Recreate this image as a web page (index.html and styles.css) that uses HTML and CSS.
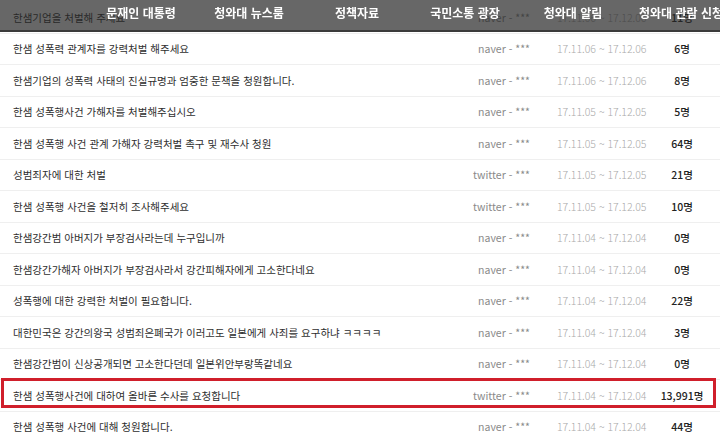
FILE: index.html
```html
<!DOCTYPE html>
<html lang="ko">
<head>
    <meta charset="UTF-8">
    <title>청원 목록</title>
    <link rel="stylesheet" href="styles.css">
</head>
<body>
    <div class="topbar">
        <a>문재인 대통령</a>
        <a>청와대 뉴스룸</a>
        <a>정책자료</a>
        <a>국민소통 광장</a>
        <a>청와대 알림</a>
        <a>청와대 관람 신청</a>
    </div>

    <ul class="list">
        <li><span class="title">한샘기업을 처벌해 주세요</span><span class="who">naver - ***</span><span class="date">17.11.06 ~ 17.12.06</span><span class="count">11명</span></li>
        <li><span class="title">한샘 성폭력 관계자를 강력처벌 해주세요</span><span class="who">naver - ***</span><span class="date">17.11.06 ~ 17.12.06</span><span class="count">6명</span></li>
        <li><span class="title">한샘기업의 성폭력 사태의 진실규명과 엄중한 문책을 청원합니다.</span><span class="who">naver - ***</span><span class="date">17.11.06 ~ 17.12.06</span><span class="count">8명</span></li>
        <li><span class="title">한샘 성폭행사건 가해자를 처벌해주십시오</span><span class="who">naver - ***</span><span class="date">17.11.05 ~ 17.12.05</span><span class="count">5명</span></li>
        <li><span class="title">한샘 성폭행 사건 관계 가해자 강력처벌 촉구 및 재수사 청원</span><span class="who">naver - ***</span><span class="date">17.11.05 ~ 17.12.05</span><span class="count">64명</span></li>
        <li><span class="title">성범죄자에 대한 처벌</span><span class="who">twitter - ***</span><span class="date">17.11.05 ~ 17.12.05</span><span class="count">21명</span></li>
        <li><span class="title">한샘 성폭행 사건을 철저히 조사해주세요</span><span class="who">twitter - ***</span><span class="date">17.11.05 ~ 17.12.05</span><span class="count">10명</span></li>
        <li><span class="title">한샘강간범 아버지가 부장검사라는데 누구입니까</span><span class="who">naver - ***</span><span class="date">17.11.04 ~ 17.12.04</span><span class="count">0명</span></li>
        <li><span class="title">한샘강간가해자 아버지가 부장검사라서 강간피해자에게 고소한다네요</span><span class="who">naver - ***</span><span class="date">17.11.04 ~ 17.12.04</span><span class="count">0명</span></li>
        <li><span class="title">성폭행에 대한 강력한 처벌이 필요합니다.</span><span class="who">naver - ***</span><span class="date">17.11.04 ~ 17.12.04</span><span class="count">22명</span></li>
        <li><span class="title">대한민국은 강간의왕국 성범죄은폐국가 이러고도 일본에게 사죄를 요구하냐 ㅋㅋㅋㅋ</span><span class="who">naver - ***</span><span class="date">17.11.04 ~ 17.12.04</span><span class="count">3명</span></li>
        <li><span class="title">한샘강간범이 신상공개되면 고소한다던데 일본위안부랑똑같네요</span><span class="who">naver - ***</span><span class="date">17.11.04 ~ 17.12.04</span><span class="count">0명</span></li>
        <li class="marked"><span class="title">한샘 성폭행사건에 대하여 올바른 수사를 요청합니다</span><span class="who">twitter - ***</span><span class="date">17.11.04 ~ 17.12.04</span><span class="count">13,991명</span></li>
        <li><span class="title">한샘 성폭행 사건에 대해 청원합니다.</span><span class="who">naver - ***</span><span class="date">17.11.04 ~ 17.12.04</span><span class="count">44명</span></li>
    </ul>
</body>
</html>
```

FILE: styles.css
```css
body {
    margin: 0;
    background: #fff;
    font-family: 'Noto Sans CJK KR', 'Noto Sans', sans-serif;
    overflow: hidden;
}

/* dark see-through menu over the list */
.topbar {
    position: fixed;
    top: 0;
    left: 0;
    right: 0;
    height: 32px;
    box-sizing: border-box;
    padding: 4px 0 0 87px;
    display: flex;
    background: rgba(38, 38, 38, 0.7);
    border-bottom: 2px solid #3b3b3b;
    white-space: nowrap;
    z-index: 2;
}

.topbar a {
    flex: 0 0 108px;
    text-align: center;
    color: #fff;
    font-size: 12px;
    font-weight: bold;
    line-height: 17px;
}

.list {
    list-style: none;
    margin: 0;
    padding: 2px 0 0;
}

.list li {
    position: relative;
    display: flex;
    align-items: center;
    height: 31.5px;
    box-sizing: border-box;
    padding-left: 13px;
    border-bottom: 1px solid #efefef;
    font-size: 10.5px;
    white-space: nowrap;
}

.title {
    flex: 1;
    color: #2e2e2e;
}

.who {
    width: 90px;
    text-align: right;
    color: #8a8a8a;
}

.date {
    width: 94px;
    margin-left: 27px;
    color: #aaa;
    font-weight: 300;
}

.count {
    width: 62px;
    text-align: center;
    color: #222;
    font-weight: 500;
    margin-right: 7px;
}

.marked::after {
    content: "";
    position: absolute;
    left: 1px;
    right: 4px;
    top: -2px;
    bottom: 3px;
    border: 3px solid #d01f2b;
}
```
